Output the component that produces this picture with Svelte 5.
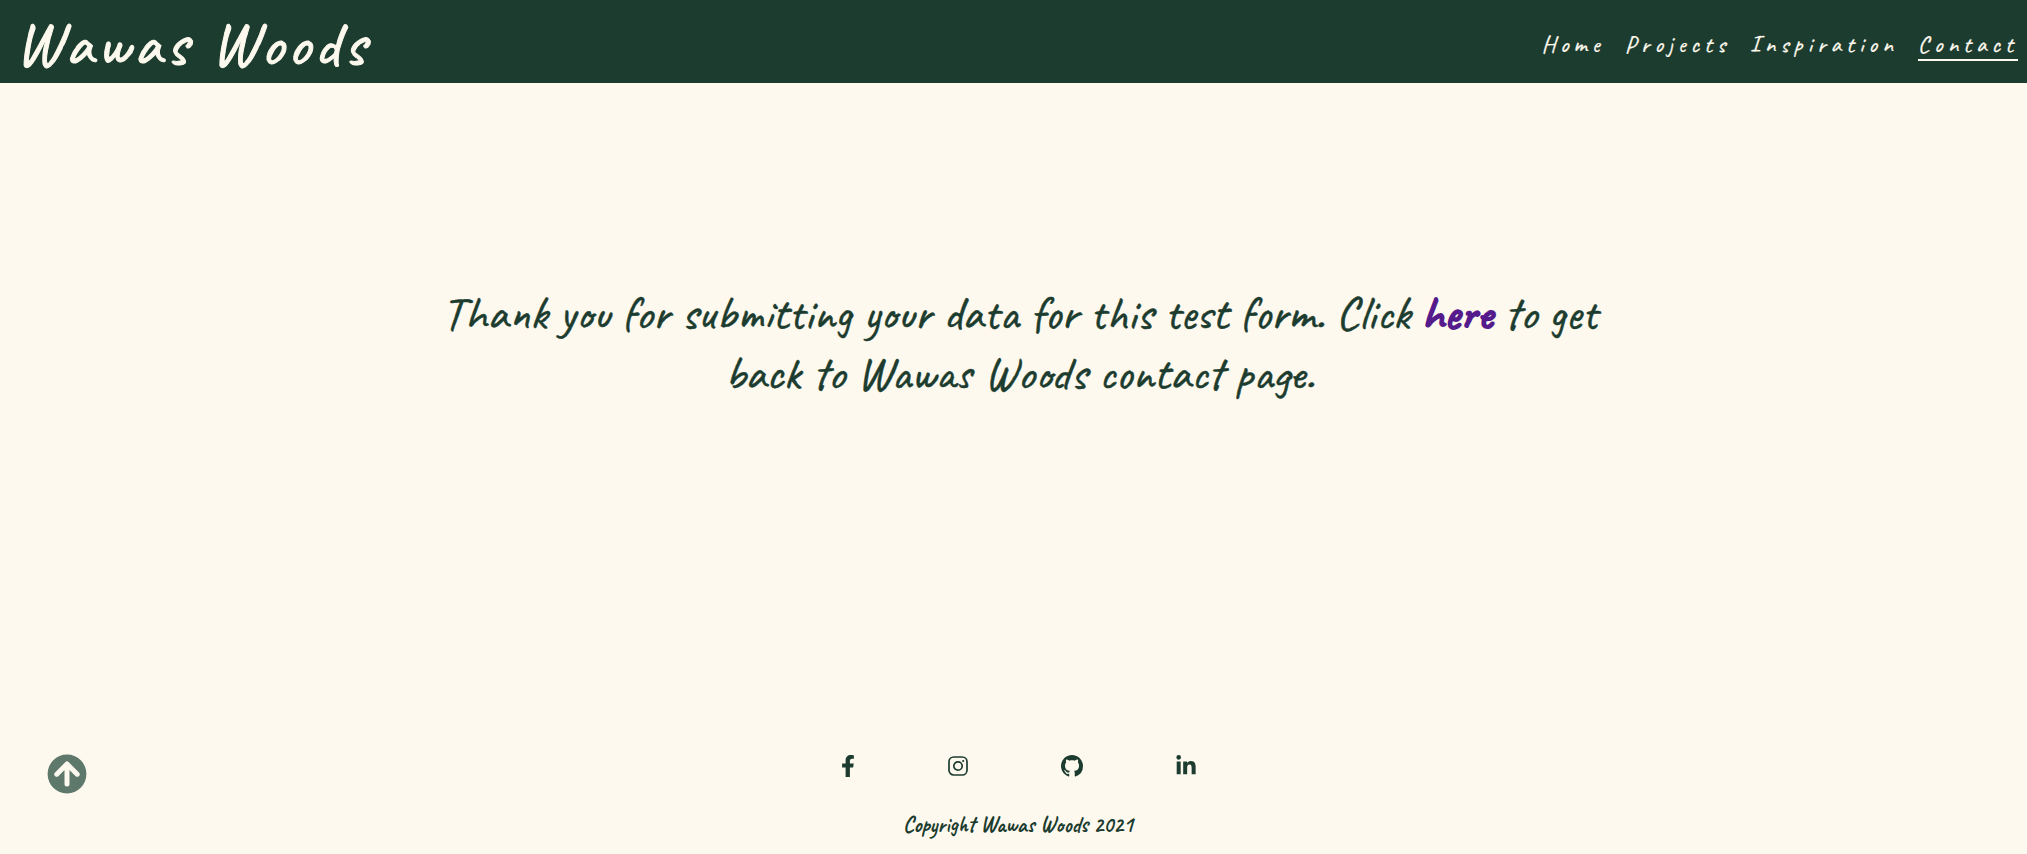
<script>
  const pages = ['Home', 'Projects', 'Inspiration', 'Contact'];
  const current = 'Contact';
</script>

<div class="page">
  <header>
    <a class="logo" href="#home">Wawas Woods</a>
    <nav aria-label="Main">
      {#each pages as page}
        <a
          href={'#' + page.toLowerCase()}
          class:active={page === current}
          aria-current={page === current ? 'page' : undefined}>{page}</a>
      {/each}
    </nav>
  </header>

  <main>
    <p>
      Thank you for submitting your data for this test form. Click <a href="#contact">here</a> to get
      back to Wawas Woods contact page.
    </p>
  </main>

  <footer>
    <a class="top" href="#home" aria-label="Back to top">
      <svg viewBox="0 0 40 40" width="40" height="40" aria-hidden="true">
        <circle cx="20" cy="20" r="19.4" fill="currentColor" />
        <path d="M20 30V10.5M9.8 20.2L20 10l10.200 10.200" fill="none" stroke="#fef9ee" stroke-width="5" stroke-linecap="round" stroke-linejoin="round" />
      </svg>
    </a>
    <div class="center">
      <div class="social">
        <a href="#facebook" aria-label="Facebook">
          <svg viewBox="0 0 320 512" width="14" height="22" aria-hidden="true"><path fill="currentColor" d="M279.14 288l14.22-92.66h-88.91v-60.13c0-25.35 12.42-50.06 52.24-50.06h40.42V6.260S260.430 0 225.360 0c-73.220 0-121.080 44.380-121.080 124.720v70.620H22.890V288h81.390v224h100.170V288z" /></svg>
        </a>
        <a href="#instagram" aria-label="Instagram">
          <svg viewBox="0 0 20 22" width="20" height="22" fill="none" stroke="currentColor" aria-hidden="true">
            <rect x="1" y="2" width="18" height="18" rx="4.800" stroke-width="1.700" />
            <circle cx="10" cy="11" r="4.200" stroke-width="1.700" />
            <circle cx="15.200" cy="6" r="1.100" fill="currentColor" stroke="none" />
          </svg>
        </a>
        <a href="#github" aria-label="GitHub">
          <svg viewBox="0 0 16 16" width="22" height="22" aria-hidden="true"><path fill="currentColor" d="M8 0C3.58 0 0 3.58 0 8c0 3.54 2.29 6.53 5.470 7.590.4.070.55-.170.55-.380 0-.190-.010-.820-.010-1.490-2.010.370-2.530-.490-2.690-.940-.090-.230-.480-.940-.820-1.130-.280-.150-.680-.520-.010-.530.630-.010 1.080.580 1.230.820.720 1.210 1.870.870 2.330.660.070-.520.280-.870.510-1.070-1.780-.200-3.640-.890-3.640-3.950 0-.870.310-1.590.820-2.150-.080-.200-.360-1.020.080-2.120 0 0 .670-.210 2.200.820.640-.180 1.320-.270 2-.270s1.360.090 2 .270c1.530-1.040 2.200-.820 2.200-.820.440 1.100.160 1.920.080 2.120.510.560.820 1.270.820 2.150 0 3.070-1.870 3.750-3.650 3.950.290.250.540.730.540 1.480 0 1.070-.010 1.930-.010 2.200 0 .210.150.460.550.380A8.010 8.010 0 0 0 16 8c0-4.420-3.580-8-8-8z" /></svg>
        </a>
        <a href="#linkedin" aria-label="LinkedIn">
          <svg viewBox="0 0 448 512" width="20" height="22" aria-hidden="true"><path fill="currentColor" d="M100.28 448H7.400V148.900h92.880zM53.790 108.100C24.090 108.100 0 83.500 0 53.800a53.790 53.790 0 0 1 107.580 0c0 29.700-24.100 54.300-53.790 54.300zM447.900 448h-92.680V302.400c0-34.700-.7-79.200-48.290-79.200-48.290 0-55.690 37.700-55.690 76.700V448h-92.780V148.900h89.080v40.800h1.300c12.400-23.500 42.690-48.300 87.880-48.300 94 0 111.280 61.900 111.280 142.300V448z" /></svg>
        </a>
      </div>
      <p>Copyright Wawas Woods 2021</p>
    </div>
  </footer>
</div>

<style>
  :global(body) {
    margin: 0;
    background: #fef9ee;
  }
  .page {
    min-height: 100vh;
    display: flex;
    flex-direction: column;
    color: #1c3c2f;
    font-family: Caveat, Lato, sans-serif;
    font-weight: 500;
  }
  header {
    display: flex;
    align-items: center;
    justify-content: space-between;
    height: 83px;
    padding: 0 9px 0 15px;
    background: #1c3c2f;
  }
  header a {
    color: #fef9ee;
    text-decoration: none;
  }
  .logo {
    padding-top: 4px;
    font-size: 64px;
    line-height: 80px;
    letter-spacing: 4px;
    -webkit-text-stroke: 1px currentColor;
  }
  nav {
    display: flex;
    gap: 20px;
    padding-top: 6px;
  }
  nav a {
    font-size: 24px;
    line-height: 30px;
    letter-spacing: 5px;
    border-bottom: 2px solid transparent;
    -webkit-text-stroke: 0.01em currentColor;
  }
  nav a.active {
    border-color: #fef9ee;
  }
  main {
    flex: 1;
    padding: 200px 20%;
  }
  main p {
    margin: 0 0 0 12px;
    text-align: center;
    font-size: 48px;
    line-height: 60px;
    -webkit-text-stroke: 0.01em currentColor;
  }
  main a {
    color: #551a8b;
    text-decoration: none;
    -webkit-text-stroke: 2px currentColor;
  }
  footer {
    display: grid;
    grid-template-columns: 1fr auto 1fr;
    padding: 0 38px 11px 47px;
  }
  .top {
    justify-self: start;
    height: 40px;
    padding-top: 1px;
    color: #5f786c;
  }
  .center {
    display: flex;
    flex-direction: column;
    align-items: center;
    gap: 30px;
  }
  .social {
    display: flex;
    gap: 93px;
    padding-top: 2px;
  }
  .social a {
    color: inherit;
  }
  svg {
    display: block;
  }
  .center p {
    margin: 0;
    font-size: 22px;
    line-height: 36px;
    font-weight: 700;
  }
</style>
